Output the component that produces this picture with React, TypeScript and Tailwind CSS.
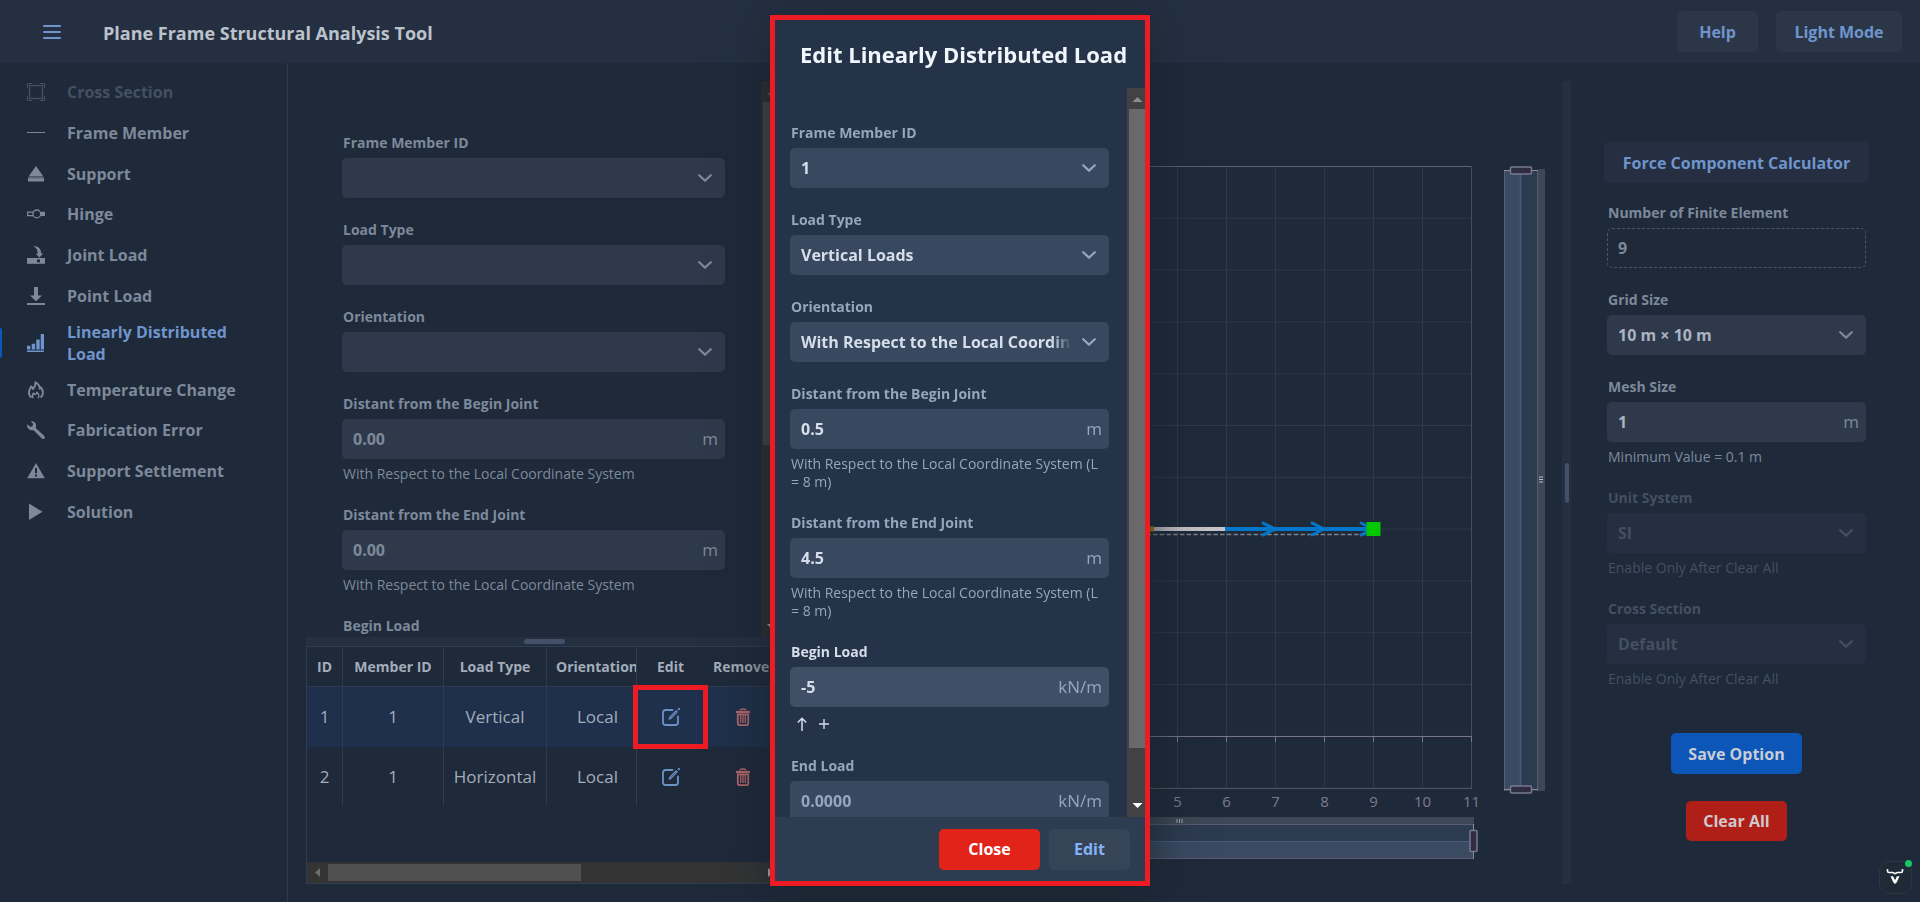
import type { ReactNode } from "react";

type Tone = "dim" | "bright" | "off";

const labelTone: Record<Tone, string> = {
  dim: "text-[#7d899a]",
  bright: "text-[#97a5bd]",
  off: "text-[#435062]",
};
const boxTone: Record<Tone, string> = {
  dim: "bg-[#2e3a4b]",
  bright: "bg-[#37485f]",
  off: "bg-[#252f41]",
};
const valueTone: Record<Tone, string> = {
  dim: "text-[#a9b3c1]",
  bright: "text-[#d6deeb]",
  off: "text-[#435062]",
};

function Chevron({ className }: { className: string }) {
  return (
    <svg viewBox="0 0 14 8" className={`pointer-events-none absolute right-[13px] top-4 h-2 w-[14px] ${className}`} fill="none" stroke="currentColor" strokeWidth="2.2" strokeLinecap="round" strokeLinejoin="round">
      <path d="M1.2 1.2 7 6.6l5.8-5.4" />
    </svg>
  );
}

interface FieldProps {
  id: string;
  label: string;
  tone: Tone;
  hint?: ReactNode;
  active?: boolean;
  children: ReactNode;
}

function Field({ id, label, tone, hint, active, children }: FieldProps) {
  return (
    <div className="mb-[22px]">
      <label htmlFor={id} className={`mb-[5px] block h-5 pl-px text-[14px] font-bold leading-5 ${active ? "text-[#d6deeb]" : labelTone[tone]}`}>
        {label}
      </label>
      {children}
      {hint}
    </div>
  );
}

function Hint({ tone, children }: { tone: Tone; children: ReactNode }) {
  return <p className={`mt-1.5 pl-px text-[14px] leading-[18px] ${labelTone[tone]}`}>{children}</p>;
}

function SelectField({ id, label, tone, value, hint, fade }: { id: string; label: string; tone: Tone; value: string; hint?: string; fade?: boolean }) {
  return (
    <Field id={id} label={label} tone={tone} hint={hint && <Hint tone={tone}>{hint}</Hint>}>
      <div className="relative">
        <select id={id} disabled={tone === "off"} defaultValue={value} className={`block h-10 w-full appearance-none overflow-hidden rounded-[5px] pl-[11px] pr-[38px] text-[16px] font-bold opacity-100 outline-none ${boxTone[tone]} ${valueTone[tone]}`}>
          <option>{value}</option>
        </select>
        {fade && <span className="pointer-events-none absolute right-[38px] top-0 h-10 w-5 bg-linear-to-r from-[#37485f]/0 to-[#37485f]" />}
        <Chevron className={labelTone[tone]} />
      </div>
    </Field>
  );
}

function InputField({ id, label, tone, value, placeholder, unit, hint, active }: { id: string; label: string; tone: Tone; value?: string; placeholder?: string; unit: string; hint?: ReactNode; active?: boolean }) {
  return (
    <Field id={id} label={label} tone={tone} hint={hint} active={active}>
      <div className={`flex h-10 items-center rounded-[5px] pl-[11px] pr-[7px] ${active ? "bg-[#3f4f66]" : boxTone[tone]}`}>
        <input id={id} defaultValue={value} placeholder={placeholder} className={`w-full min-w-0 flex-1 bg-transparent text-[16px] font-bold outline-none ${valueTone[tone]} ${tone === "bright" ? "placeholder:text-[#97a5bd]" : "placeholder:text-[#7d899a]"}`} />
        <span className={`text-[17px] ${labelTone[tone]}`}>{unit}</span>
      </div>
    </Field>
  );
}

const icons: Record<string, ReactNode> = {
  section: (
    <g fill="none" stroke="currentColor">
      <rect x="2.5" y="2.5" width="13" height="13" strokeWidth="1.4" />
      <path d="M.5 5V.5H5M13 .5h4.5V5M17.5 13v4.5H13M5 17.5H.5V13" />
    </g>
  ),
  member: <path d="M0 8h18v1H0z" fill="currentColor" />,
  support: (
    <g fill="currentColor">
      <path d="M9 1l7.4 10.5H1.6z" />
      <path d="M1 12h16v1.2H1z" opacity=".6" />
      <path d="M1 13.2h16v3.3H1z" />
    </g>
  ),
  hinge: (
    <g fill="none" stroke="currentColor" strokeWidth="1.3">
      <path d="M6 7.2H.7v3.4H6" />
      <circle cx="9.8" cy="8.9" r="3.9" />
      <path d="M14 6.8h4v4.2h-4z" fill="currentColor" stroke="none" />
    </g>
  ),
  joint: (
    <g fill="currentColor">
      <path d="M0 12h18v5.8H0z" />
      <path d="M10 13.5h3v2.8h-3z" fill="#1e293a" />
      <path d="M6.2.3C10.5-.2 14 1.500 14.200 7.600h2L12.500 11.500 8.600 7.800h2.200C10.700 4 9.500 1.500 6.200.3z" />
    </g>
  ),
  point: <path d="M7 0h4v8.500h4L9 14.200 3 8.500h4zM0 16h18v2H0z" fill="currentColor" />,
  linear: <path d="M0 11.800h3.400v3.700H0zM4.700 9.800h3.400v5.700H4.700zM9.300 5.600h3.400v9.900H9.300zM13.700 0H17v15.500h-3.300zM0 16.600h17V18H0z" fill="currentColor" />,
  fire: (
    <g fill="none" stroke="currentColor" strokeWidth="1.900" strokeLinejoin="round">
      <path d="M4.600 16.400C2.500 15 1.800 12.800 2 10.800c.2-2 1.400-3.400 2-5.300 1.200.5 1.700 1.400 1.900 2.500C7.500 6.300 8.700 4 8.400 1.300c3.200 1.400 4.300 4 4.300 6.400.6-.5.900-.9 1.100-1.600 1.500 2 2.300 3.700 2.200 5.700-.1 2-1 3.600-2.500 4.600" />
      <path d="M6.300 17c-1.300-1.800-.9-3.400.1-4.900.5 1 1.200 1.300 2 1.200.900-.1 1.500-.900 1.400-2.100 2 1.500 2.600 4 1.300 5.800" strokeWidth="1.500" />
    </g>
  ),
  wrench: <path d="M.3 3.200 3 5.800l2.500-.5.600-2.600L3.700.3C6.500-.4 9.500 1.600 9.100 5.200L8.700 7l8.600 8.100c1.600 1.800-.7 4-2.400 2.500L6.600 9.200C3 10-.7 7.200.3 3.200z" fill="currentColor" />,
  warning: (
    <g>
      <path d="M9 1l8.800 15.200H.2z" fill="currentColor" />
      <path d="M8 6h2v5.200H8zM8 12.500h2v2H8z" fill="#1e293a" />
    </g>
  ),
  play: <path d="M2 .5l13.500 8.300L2 17z" fill="currentColor" />,
};

const navItems = [
  ["section", "Cross Section"],
  ["member", "Frame Member"],
  ["support", "Support"],
  ["hinge", "Hinge"],
  ["joint", "Joint Load"],
  ["point", "Point Load"],
  ["linear", "Linearly Distributed Load"],
  ["fire", "Temperature Change"],
  ["wrench", "Fabrication Error"],
  ["warning", "Support Settlement"],
  ["play", "Solution"],
];

function Sidebar() {
  return (
    <aside className="w-[288px] shrink-0 border-r border-[#2f3a4b] pt-[9px]">
      <nav className="flex h-[460px] flex-col justify-between">
        {navItems.map(([icon, text]) => {
          const active = icon === "linear";
          const color = active ? "text-[#6f95cc]" : icon === "section" ? "text-[#435062]" : "text-[#7d899a]";
          return (
            <a key={icon} href="#" className={`relative flex min-h-10 items-center gap-[22px] py-1 pl-[27px] pr-10 text-[16px] font-bold leading-[22px] ${color}`}>
              {active && <span className="absolute left-0 top-[11px] h-[30px] w-0.5 rounded-r-sm bg-[#0c57b8]" />}
              <svg viewBox="0 0 18 18" className="size-[18px] shrink-0">{icons[icon]}</svg>
              <span>{text}</span>
            </a>
          );
        })}
      </nav>
    </aside>
  );
}

function EditIcon() {
  return (
    <svg viewBox="0 0 18 18" className="size-[18px]" fill="none" stroke="currentColor" strokeWidth="1.800" strokeLinecap="round" strokeLinejoin="round">
      <path d="M10.500 2H3.500A2.500 2.500 0 0 0 1 4.500v10A2.500 2.500 0 0 0 3.500 17h10a2.500 2.500 0 0 0 2.500-2.500V8.500" />
      <path d="M7.200 11.200 8 9l6-6.200 1.200 1.100-6 6.300z" strokeWidth="1.200" />
      <path d="M16.700 1.200l.3-.3" strokeWidth="2" />
    </svg>
  );
}

function TrashIcon() {
  return (
    <svg viewBox="0 0 14 18" className="h-[18px] w-[14px]" fill="none" stroke="currentColor" strokeWidth="1.300">
      <path d="M4 2.500C4.200.5 9.800.5 10 2.500" />
      <path d="M0 4h14" strokeWidth="2.200" />
      <path d="M1.800 6.300v9.300c0 1 .6 1.600 1.600 1.600h7.200c1 0 1.600-.6 1.600-1.600V6.300z" strokeWidth="1.800" />
      <path d="M4.700 7v8M7 7v8M9.300 7v8" />
    </svg>
  );
}

const loads = [
  { id: 1, member: 1, type: "Vertical", axis: "Local" },
  { id: 2, member: 1, type: "Horizontal", axis: "Local" },
];

function LoadTable() {
  const cell = "border-r border-[#2f3b4d] p-0 text-center align-middle";
  return (
    <div className="flex flex-1 flex-col overflow-hidden border border-[#303c50]">
      <div className="flex-1">
        <table className="w-[474px] table-fixed border-separate border-spacing-0 text-[#a3adba]">
          <colgroup>
            <col className="w-9" />
            <col className="w-[101px]" />
            <col className="w-[103px]" />
            <col className="w-[90px]" />
            <col className="w-[67px]" />
            <col className="w-[77px]" />
          </colgroup>
          <thead>
            <tr className="h-10 text-[14px]">
              {["ID", "Member ID", "Load Type", "Orientation", "Edit", "Remove"].map((h) => (
                <th key={h} className={`${h === "Orientation" ? "overflow-hidden pl-[9px] text-left" : h === "Remove" ? "pl-[9px] text-left" : "text-center"} ${h === "Edit" || h === "Remove" ? "" : "border-r"} border-b border-[#2f3b4d] py-0 pr-0 font-bold`}>
                  {h}
                </th>
              ))}
            </tr>
          </thead>
          <tbody className="text-[17px]">
            {loads.map((row) => (
              <tr key={row.id} className={row.id === 1 ? "h-[60px] bg-[#1e304b]" : "h-[59px]"}>
                <td className={cell}>{row.id}</td>
                <td className={cell}>{row.member}</td>
                <td className={cell}>{row.type}</td>
                <td className={`${cell} pl-3`}>{row.axis}</td>
                <td className="relative p-0">
                  <button aria-label="Edit load" className="mx-auto block text-[#6c92c8]"><EditIcon /></button>
                  {row.id === 1 && <span className="pointer-events-none absolute -inset-x-1 -inset-y-0.5 border-[5px] border-[#ed1c24]" />}
                </td>
                <td className="p-0">
                  <button aria-label="Remove load" className="mx-auto block text-[#b8696a]"><TrashIcon /></button>
                </td>
              </tr>
            ))}
          </tbody>
        </table>
      </div>
      <div className="flex h-[21px] shrink-0 items-center bg-[#343434]">
        <svg viewBox="0 0 21 21" className="size-[21px]"><path d="M13 6v9l-5-4.500z" fill="#6d6d6d" /></svg>
        <div className="h-[17px] w-[253px] bg-[#505050]" />
        <svg viewBox="0 0 21 21" className="ml-auto size-[21px]"><path d="M8 6v9l5-4.500z" fill="#c0c0c0" /></svg>
      </div>
    </div>
  );
}

function LoadPanel() {
  return (
    <section className="flex w-[476px] shrink-0 flex-col">
      <div className="flex h-[556px] shrink-0 overflow-hidden">
        <form className="flex-1 px-9 pt-[52px]">
          <SelectField id="member" label="Frame Member ID" tone="dim" value="" />
          <SelectField id="type" label="Load Type" tone="dim" value="" />
          <SelectField id="axis" label="Orientation" tone="dim" value="" />
          <InputField id="begin" label="Distant from the Begin Joint" tone="dim" placeholder="0.00" unit="m" hint={<Hint tone="dim">With Respect to the Local Coordinate System</Hint>} />
          <InputField id="end" label="Distant from the End Joint" tone="dim" placeholder="0.00" unit="m" hint={<Hint tone="dim">With Respect to the Local Coordinate System</Hint>} />
          <InputField id="load" label="Begin Load" tone="dim" placeholder="0.00" unit="kN/m" />
        </form>
        <div className="flex w-[21px] flex-col bg-[#303030]">
          <svg viewBox="0 0 21 21" className="size-[21px]"><path d="M6 14h9l-4.500-5z" fill="#6d6d6d" /></svg>
          <div className="ml-0.5 h-[343px] w-[17px] bg-[#4a4a4a]" />
          <svg viewBox="0 0 21 21" className="mt-auto size-[21px]"><path d="M6 8h9l-4.500 5z" fill="#c0c0c0" /></svg>
        </div>
      </div>
      <div className="flex h-[9px] shrink-0 items-center justify-center bg-[#242f40]">
        <div className="h-[5px] w-[41px] rounded-full bg-[#435069]" />
      </div>
      <LoadTable />
    </section>
  );
}

const columns = Array.from({ length: 13 }, (_, i) => 101.500 + i * 49);
const rows = Array.from({ length: 13 }, (_, i) => 85.500 + i * 51.800);

function Chart() {
  return (
    <svg viewBox="0 0 780 803" preserveAspectRatio="xMaxYMin meet" className="h-full w-full min-w-0 flex-1">
      <g stroke="#343743">
        {columns.map((x) => <path key={x} d={`M${x} 85V708`} />)}
        {rows.map((y) => <path key={y} d={`M101 ${y}H690`} />)}
      </g>
      <path d="M101 85.500H690" stroke="#5d626c" />
      <path d="M689.500 85V708" stroke="#484c59" />
      <path d="M101 707.500H690" stroke="#4e535c" />
      <g stroke="#777789">
        <path d="M101 655.500H690" />
        {columns.map((x) => <path key={x} d={`M${x} 656v5`} />)}
      </g>
      <g fontSize="15" fill="#7b7c8e" textAnchor="middle">
        {columns.map((x, i) => <text key={x} x={x} y="726">{i - 1}</text>)}
      </g>

      <path d="M150 453.500h442" stroke="#7d818a" strokeWidth="1.500" strokeDasharray="4.500 2.200" />
      <path d="M150 448h294" stroke="#c4c3c7" strokeWidth="4" />
      <path d="M360 448h12" stroke="#b87e10" strokeWidth="5" />
      <path d="M443 448h149" stroke="#0577ca" strokeWidth="4" />
      <g fill="none" stroke="#0577ca" strokeWidth="3">
        {[493, 542, 591].map((x) => <path key={x} d={`M${x - 13} 441.500l13 6.500-13 6.500`} />)}
      </g>
      <rect x="584.500" y="441" width="14" height="14" fill="#02c802" />

      <rect x="722" y="89" width="17" height="621" fill="#3a4a61" />
      <rect x="739" y="89" width="17" height="621" fill="#2d3b51" />
      <rect x="756" y="88" width="7" height="622" fill="#3c4855" />
      <path d="M738.500 90v620" stroke="#465b7e" strokeWidth="1.500" />
      <path d="M722.500 89v621M755.500 89v621" stroke="#5a5c70" />
      <path d="M722 89.500h34M722 708.500h34" stroke="#8a8d9e" />
      <rect x="728.500" y="86" width="21" height="7" rx="1" fill="#302d42" stroke="#777a8e" strokeWidth="1.500" />
      <rect x="728.500" y="705" width="21" height="7" rx="1" fill="#302d42" stroke="#777a8e" strokeWidth="1.500" />
      <path d="M757 396h4M757 398.500h4M757 401h4" stroke="#b9bec5" />

      <rect x="101" y="736" width="591" height="7" fill="#3c4855" />
      <rect x="101" y="743" width="591" height="18" fill="#2d3b51" />
      <rect x="101" y="761" width="591" height="17" fill="#3a4a61" />
      <path d="M101 760.500h591" stroke="#465b7e" />
      <path d="M101 743.500h591M101 777.500h591" stroke="#5a5c70" />
      <path d="M691.500 743v35" stroke="#8a8d9e" />
      <rect x="688" y="749.500" width="7" height="21" rx="1" fill="#302d42" stroke="#777a8e" strokeWidth="1.500" />
      <path d="M395 738v4M397.500 738v4M400 738v4" stroke="#a5abb2" />
    </svg>
  );
}

function OptionPanel() {
  return (
    <section className="w-[349px] shrink-0 pl-[33px] pt-[61px]">
      <div className="flex w-[265px] flex-col">
        <button className="mb-5 h-[41px] whitespace-nowrap rounded-[5px] bg-[#252f41] text-[16px] font-bold text-[#6f95cc]">Force Component Calculator</button>
        <div className="px-[3px]">
          <Field id="count" label="Number of Finite Element" tone="dim">
            <input id="count" readOnly defaultValue="9" className="block h-10 w-full rounded-[5px] border border-dashed border-[#4a5668] bg-transparent px-2.5 text-[16px] font-bold text-[#7d899a] outline-none" />
          </Field>
          <SelectField id="grid" label="Grid Size" tone="dim" value="10 m × 10 m" />
          <InputField id="mesh" label="Mesh Size" tone="dim" value="1" unit="m" hint={<Hint tone="dim">Minimum Value = 0.1 m</Hint>} />
          <SelectField id="unit" label="Unit System" tone="off" value="SI" hint="Enable Only After Clear All" />
          <SelectField id="section" label="Cross Section" tone="off" value="Default" hint="Enable Only After Clear All" />
        </div>
        <div className="flex flex-col items-center gap-[27px] pt-[23px]">
          <button className="h-[41px] w-[131px] rounded-[5px] bg-[#0c56b8] text-[16px] font-bold text-[#c9cdd4]">Save Option</button>
          <button className="h-10 w-[101px] rounded-[5px] bg-[#b01f17] text-[16px] font-bold text-[#cfc9cc]">Clear All</button>
        </div>
      </div>
    </section>
  );
}

function LoadDialog() {
  const local = <Hint tone="bright">With Respect to the Local Coordinate System (L = 8 m)</Hint>;
  return (
    <div className="fixed inset-0 flex items-center justify-center pb-px">
      <div role="dialog" aria-label="Edit Linearly Distributed Load" className="flex w-[380px] flex-col border-[5px] border-[#ed1c24] bg-[#243348] shadow-[0_6px_48px_rgba(24,36,46,0.9)]">
        <h2 className="h-[68px] whitespace-nowrap pl-[25px] pt-[18px] text-[22px] font-bold leading-8 text-[#f1f5fc]">Edit Linearly Distributed Load</h2>
        <div className="flex h-[729px] overflow-hidden">
          <form className="w-[352px] pl-[15px] pr-[18px] pt-[35px]">
            <SelectField id="edit-member" label="Frame Member ID" tone="bright" value="1" />
            <SelectField id="edit-type" label="Load Type" tone="bright" value="Vertical Loads" />
            <SelectField id="edit-axis" label="Orientation" tone="bright" value="With Respect to the Local Coordinate System" fade />
            <InputField id="edit-begin" label="Distant from the Begin Joint" tone="bright" value="0.5" unit="m" hint={local} />
            <InputField id="edit-end" label="Distant from the End Joint" tone="bright" value="4.5" unit="m" hint={local} />
            <InputField
              id="edit-load"
              label="Begin Load"
              tone="bright"
              value="-5"
              unit="kN/m"
              active
              hint={
                <div className="mt-1.5 flex h-[21px] items-center gap-3 pl-[7px] text-[#d6deeb]">
                  <svg viewBox="0 0 10 14" className="h-[14px] w-[10px]" fill="none" stroke="currentColor" strokeWidth="1.500"><path d="M5 14V1.500M.8 5.500 5 1.200l4.200 4.300" /></svg>
                  <svg viewBox="0 0 10 10" className="size-[10px]" stroke="currentColor" strokeWidth="1.400"><path d="M5 0v10M0 5h10" /></svg>
                </div>
              }
            />
            <InputField id="edit-end-load" label="End Load" tone="bright" placeholder="0.0000" unit="kN/m" />
          </form>
          <div className="flex flex-1 flex-col bg-[#424242]">
            <svg viewBox="0 0 18 21" className="h-[21px] w-[18px]"><path d="M5.500 14h10l-5-5z" fill="#8d8d8d" /></svg>
            <div className="ml-0.5 h-[639px] bg-[#696969]" />
            <svg viewBox="0 0 18 21" className="mt-auto h-[21px] w-[18px]"><path d="M5.500 7h10l-5 5z" fill="#fff" /></svg>
          </div>
        </div>
        <footer className="flex h-16 items-center justify-end gap-[9px] bg-[#2e3c51] pr-[15px]">
          <button className="h-[41px] w-[101px] rounded-[5px] bg-[#e2231a] text-[16px] font-bold text-white">Close</button>
          <button className="h-[41px] w-[81px] rounded-[5px] bg-[#364458] text-[16px] font-bold text-[#85b2f5]">Edit</button>
        </footer>
      </div>
    </div>
  );
}

export default function App() {
  return (
    <div className="flex h-screen flex-col bg-[#1e293a] font-['Open_Sans',sans-serif]">
      <header className="flex h-[63px] shrink-0 items-center bg-[#243042] pl-[43px] pr-[18px]">
        <button aria-label="Toggle menu" className="text-[#6f95cc]">
          <svg viewBox="0 0 18 14" className="h-[14px] w-[18px]" stroke="currentColor" strokeWidth="2" strokeLinecap="round"><path d="M1 1h16M1 7h16M1 13h16" /></svg>
        </button>
        <h1 className="ml-[42px] pt-[3px] text-[18px] font-bold text-[#bcc2cb]">Plane Frame Structural Analysis Tool</h1>
        <div className="ml-auto flex gap-[18px]">
          <button className="h-[41px] w-[81px] rounded-[5px] bg-[#2b3749] text-[16px] font-bold text-[#6f95cc]">Help</button>
          <button className="h-[41px] w-[126px] rounded-[5px] bg-[#2b3749] text-[16px] font-bold text-[#6f95cc]">Light Mode</button>
        </div>
      </header>
      <div className="flex min-h-0 flex-1">
        <Sidebar />
        <main className="flex min-w-0 flex-1 py-[18px] pl-[18px]">
          <LoadPanel />
          <Chart />
          <div className="flex w-[9px] shrink-0 items-center justify-center bg-[#242f40]">
            <div className="h-10 w-1 rounded-full bg-[#435069]" />
          </div>
          <OptionPanel />
        </main>
      </div>
      <LoadDialog />
      <button aria-label="Open assistant" className="fixed bottom-2 right-2 size-[33px] rounded-[10px] border border-[#2a3746] bg-[#1f2a37]">
        <svg viewBox="0 0 33 33" className="absolute -left-px -top-px size-[33px] overflow-visible">
          <path d="M8.500 8v2c0 1 .5 1.500 1.500 1.500h3.800l2.200 1.200 2.200-1.200H22c1 0 1.500-.5 1.500-1.500V8" fill="none" stroke="#fff" strokeWidth="1.600" />
          <path d="M11.500 15.200h2.600l1.900 4 1.900-4h2.600l-2.700 6-1.800 1.800-1.800-1.800z" fill="#fff" />
          <circle cx="29.500" cy="2.500" r="3.500" fill="#17c964" />
        </svg>
      </button>
    </div>
  );
}
